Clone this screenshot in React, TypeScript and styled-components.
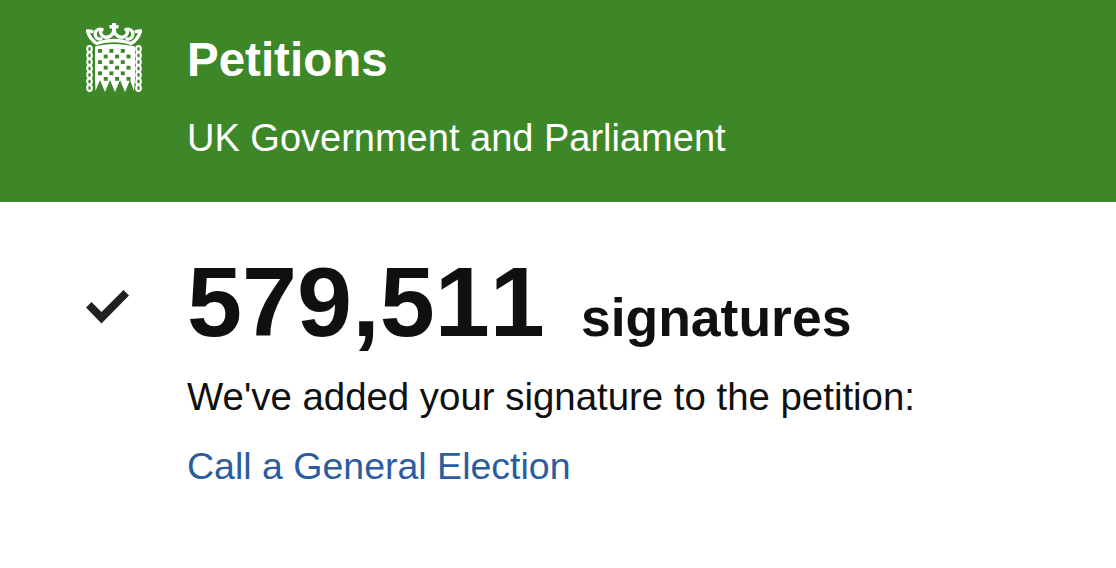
import React from 'react';
import styled, { createGlobalStyle } from 'styled-components';

const GlobalStyle = createGlobalStyle`
  html, body {
    margin: 0;
    padding: 0;
    background: #fff;
    font-family: "Liberation Sans", Arial, sans-serif;
  }
`;

const links = [0, 1, 2, 3, 4, 5, 6];
const gateRows = [0, 1, 2, 3, 4, 5];
const gateCols = [0, 1, 2, 3, 4, 5];

const Portcullis = () => (
  <svg width="58" height="70" viewBox="0 0 58 70">
    {/* crown */}
    <g fill="none" stroke="#fff" strokeWidth="3.300" strokeLinecap="round">
      <path d="M2.500 8C4 13.500 7.500 18 12 20.500" />
      <path d="M55.500 8C54 13.500 50.500 18 46 20.500" />
      <path d="M29 7C28 13 22.500 15.500 18.500 13.500C15.500 12 14.500 8.500 17 6.500" />
      <path d="M29 7C30 13 35.500 15.500 39.500 13.500C42.500 12 43.500 8.500 41 6.500" />
      <path d="M17 6.500C12.500 5 9 9 10.500 13C11.500 15.500 14 16.500 16 16" />
      <path d="M41 6.500C45.500 5 49 9 47.500 13C46.500 15.500 44 16.500 42 16" />
      <path d="M2.500 8L7 8.500M55.500 8L51 8.500" />
    </g>
    <path fill="#fff" d="M27 0h4v2h2.500v3.500h-2.500v3h-4v-3h-2.500v-3.500h2.500z" />
    <path fill="#fff" d="M12 19C22 14.500 36 14.500 46 19L44.500 21.500C34 18.500 24 18.500 13.500 21.500z" />
    {/* side chains */}
    {links.map((i) => (
      <g key={i} fill="none" stroke="#fff" strokeWidth="2.100">
        <ellipse cx="4.500" cy={26 + i * 6.500} rx="2.300" ry="3" />
        <ellipse cx="53.500" cy={26 + i * 6.500} rx="2.300" ry="3" />
      </g>
    ))}
    {/* gate */}
    <path fill="#fff" d="M10 23.500C22 20 36 20 50 23.500V56L49 68 45 57 40 69 35 57 30 69 25 57 20 69 15 57 10.500 68 10 56z" />
    {gateRows.map((r) =>
      gateCols
        .filter((c) => (c + r) % 2 === 0)
        .map((c) => (
          <rect key={`${r}-${c}`} x={13 + c * 5.700} y={26 + r * 5.600} width="4" height="3.800" fill="#3d8728" />
        )),
    )}
  </svg>
);

const Tick = () => (
  <svg width="46" height="36" viewBox="0 0 46 36" fill="#212123">
    <path d="M1 18.500L6.500 13 16.500 23 38.500 1 44 6.500 16.500 34.500z" />
  </svg>
);

const App = () => (
  <Page>
    <GlobalStyle />
    <Header>
      <LogoSlot>
        <Portcullis />
      </LogoSlot>
      <HeaderText>
        <ServiceName>Petitions</ServiceName>
        <ServiceSub>UK Government and Parliament</ServiceSub>
      </HeaderText>
    </Header>
    <Main>
      <TickSlot>
        <Tick />
      </TickSlot>
      <Content>
        <CountRow>
          <Count>579,511</Count>
          <CountLabel>signatures</CountLabel>
        </CountRow>
        <Message>We've added your signature to the petition:</Message>
        <PetitionLink href="#">Call a General Election</PetitionLink>
      </Content>
    </Main>
  </Page>
);

const Page = styled.div`
  width: 1116px;
  height: 568px;
  overflow: hidden;
  background: #fff;
`;

const Header = styled.header`
  display: flex;
  height: 202px;
  box-sizing: border-box;
  background: #3d8728;
  color: #fff;
`;

const LogoSlot = styled.div`
  width: 187px;
  box-sizing: border-box;
  padding: 23px 0 0 85px;
  svg {
    display: block;
  }
`;

const HeaderText = styled.div`
  display: flex;
  flex-direction: column;
  padding-top: 33px;
`;

const ServiceName = styled.div`
  font-size: 47.500px;
  line-height: 54px;
  font-weight: 700;
`;

const ServiceSub = styled.div`
  margin-top: 31px;
  font-size: 38px;
  line-height: 40px;
`;

const Main = styled.main`
  display: flex;
`;

const TickSlot = styled.div`
  width: 187px;
  box-sizing: border-box;
  padding: 87px 0 0 85px;
  svg {
    display: block;
  }
`;

const Content = styled.div`
  display: flex;
  flex-direction: column;
  align-items: flex-start;
`;

const CountRow = styled.div`
  display: flex;
  align-items: baseline;
  gap: 36px;
  margin-top: 44px;
`;

const Count = styled.span`
  font-size: 99px;
  line-height: 112px;
  font-weight: 700;
  font-kerning: none;
  color: #0f1010;
`;

const CountLabel = styled.span`
  font-size: 53.500px;
  line-height: 60px;
  font-weight: 700;
  color: #0f1010;
`;

const Message = styled.p`
  margin: 19px 0 0;
  font-size: 38.400px;
  line-height: 40px;
  color: #0f1010;
`;

const PetitionLink = styled.a`
  margin-top: 29px;
  font-size: 37.500px;
  line-height: 40px;
  color: #2b5c9e;
  text-decoration: none;
`;

export default App;
